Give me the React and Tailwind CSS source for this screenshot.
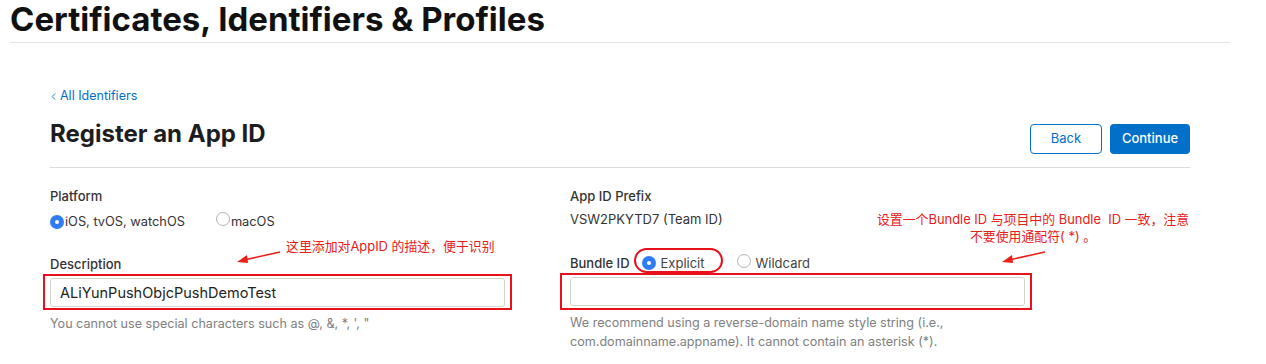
import { ChevronLeft } from "lucide-react";

function Radio({ checked }) {
    return checked ? (
        <span className="inline-flex h-[14px] w-[14px] shrink-0 items-center justify-center rounded-full bg-[#2f7cf6]">
            <span className="h-[4px] w-[4px] rounded-full bg-white" />
        </span>
    ) : (
        <span className="inline-block h-[14px] w-[14px] shrink-0 rounded-full border border-[#b4b4b4] bg-white" />
    );
}

function Arrow({ className }) {
    return (
        <svg className={className} width="46" height="14" viewBox="0 0 46 14">
            <line x1="44" y1="2" x2="8" y2="10" stroke="#e8201a" strokeWidth="1.6" />
            <polygon points="1,12 11,5 12,13" fill="#e8201a" />
        </svg>
    );
}

export default function App() {
    return (
        <div className="relative h-[364px] w-[1266px] overflow-hidden bg-white font-['Inter','Noto_Sans_CJK_SC',sans-serif] text-[#1d1d1f]">
            <header className="ml-[10px] w-[1220px] border-b border-[#e3e3e3] pb-[3px]">
                <h1 className="text-[33px] font-bold leading-[39px] text-[#111]">
                    Certificates, Identifiers &amp; Profiles
                </h1>
            </header>

            <main className="ml-[50px] w-[1140px]">
                <a className="mt-[44px] -ml-[2px] flex items-center text-[12.5px] leading-[18px] text-[#0070c9]">
                    <ChevronLeft className="mr-[1px] h-[11px] w-[11px]" strokeWidth={2} />
                    All Identifiers
                </a>

                <div className="mt-[15px] flex items-start justify-between border-b border-[#dcdcdc] pb-[13px]">
                    <h2 className="text-[24px] font-bold leading-[28px] text-[#1d1d1f]">
                        Register an App ID
                    </h2>
                    <div className="mt-[4px] flex gap-[8px]">
                        <button className="h-[30px] w-[72px] rounded-[4px] border border-[#0070c9] text-[13px] text-[#0070c9]">
                            Back
                        </button>
                        <button className="h-[30px] w-[80px] rounded-[4px] bg-[#0070c9] text-[13px] font-medium text-white">
                            Continue
                        </button>
                    </div>
                </div>

                <div className="mt-[19px] grid grid-cols-[520px_520px] text-[13px] leading-[18px] text-[#333]">
                    <div>
                        <div className="font-medium">Platform</div>
                        <div className="mt-[7px] flex items-center text-[12.8px]">
                            <Radio checked />
                            <span className="ml-[1px]">iOS, tvOS, watchOS</span>
                            <span className="ml-[31px]">
                                <Radio />
                            </span>
                            <span className="ml-[1px]">macOS</span>
                        </div>

                        <div className="mt-[24px] font-medium">Description</div>
                        <div className="-ml-[7px] mt-[1px] w-[469px] border-2 border-[#e8101a] p-[2px_5px_1px_5px]">
                            <div className="flex h-[29px] items-center rounded-[3px] border border-[#d2d2d2] px-[9px] text-[14.5px] text-[#222]">
                                ALiYunPushObjcPushDemoTest
                            </div>
                        </div>
                        <p className="mt-[4px] text-[12.6px] leading-[19px] text-[#808080]">
                            You cannot use special characters such as @, &amp;, *, &apos;, &quot;
                        </p>
                    </div>

                    <div>
                        <div className="font-medium">App ID Prefix</div>
                        <div className="mt-[5px]">VSW2PKYTD7 (Team ID)</div>

                        <div className="mt-[26px] flex items-center">
                            <span className="font-medium">Bundle ID</span>
                            <span className="relative ml-[12px] flex items-center">
                                <span className="absolute -bottom-[1px] -left-[8px] -right-[18px] -top-[6px] rounded-[13px] border-2 border-[#e8101a]" />
                                <Radio checked />
                                <span className="ml-[5px] text-[#444]">Explicit</span>
                            </span>
                            <span className="ml-[32px]">
                                <Radio />
                            </span>
                            <span className="ml-[5px] text-[#444]">Wildcard</span>
                        </div>
                        <div className="-ml-[10px] mt-[1px] w-[472px] border-2 border-[#e8101a] p-[2px_5px_2px_8px]">
                            <div className="h-[29px] rounded-[3px] border border-[#d2d2d2]" />
                        </div>
                        <p className="mt-[3px] w-[430px] text-[12.6px] leading-[19px] text-[#808080]">
                            We recommend using a reverse-domain name style string (i.e., com.domainname.appname). It cannot contain an asterisk (*).
                        </p>
                    </div>
                </div>
            </main>

            <div className="absolute left-[236px] top-[238px] flex items-start">
                <Arrow className="mt-[12px]" />
                <span className="ml-[4px] text-[12.9px] leading-[18px] text-[#e8201a]">
                    这里添加对AppID 的描述，便于识别
                </span>
            </div>

            <div className="absolute left-[870px] top-[211px] w-[326px] text-center text-[12.9px] leading-[17px] text-[#e8201a]">
                设置一个Bundle ID 与项目中的 Bundle&nbsp; ID 一致，注意
                <br />
                不要使用通配符( *) 。
            </div>
            <Arrow className="absolute left-[1001px] top-[250px]" />
        </div>
    );
}
